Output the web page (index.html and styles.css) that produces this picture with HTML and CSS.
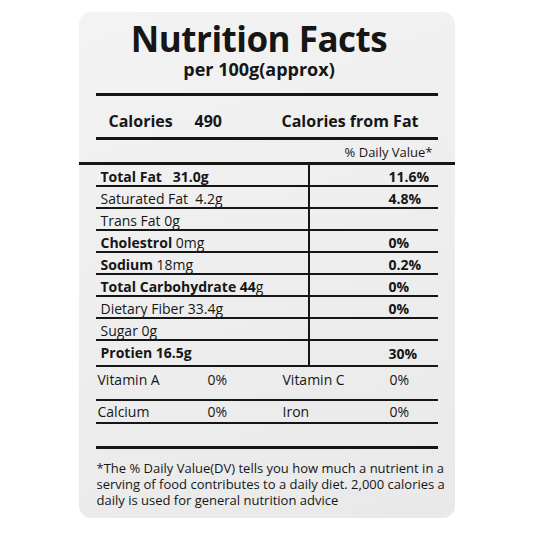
FILE: index.html
```html
<!DOCTYPE html>
<html lang="en">

<head>
  <meta charset="utf-8">
  <title>Nutrition Facts</title>
  <link rel="stylesheet" href="styles.css">
</head>

<body>
  <div class="label">
    <div class="head">
      <h1 class="title">Nutrition Facts</h1>
      <p class="sub">per 100g(approx)</p>
    </div>

    <div class="cal">
      <b>Calories</b>
      <b>490</b>
      <b>Calories from Fat</b>
    </div>
    <div class="dv">% Daily Value*</div>

    <div class="facts">
      <div class="row"><span class="name"><b>Total Fat</b>&nbsp;&nbsp;&nbsp;<b>31.0g</b></span><span class="pct">11.6%</span></div>
      <div class="row"><span class="name">Saturated Fat&nbsp;&nbsp;4.2g</span><span class="pct">4.8%</span></div>
      <div class="row"><span class="name">Trans Fat 0g</span><span class="pct"></span></div>
      <div class="row"><span class="name"><b>Cholestrol</b> 0mg</span><span class="pct">0%</span></div>
      <div class="row"><span class="name"><b>Sodium</b> 18mg</span><span class="pct">0.2%</span></div>
      <div class="row"><span class="name"><b>Total Carbohydrate</b> <b>44</b>g</span><span class="pct">0%</span></div>
      <div class="row"><span class="name">Dietary Fiber 33.4g</span><span class="pct">0%</span></div>
      <div class="row"><span class="name">Sugar 0g</span><span class="pct"></span></div>
      <div class="row tall"><span class="name"><b>Protien 16.5g</b></span><span class="pct">30%</span></div>
    </div>

    <div class="vit vit-a">
      <span>Vitamin A</span><span>0%</span><span>Vitamin C</span><span>0%</span>
    </div>
    <div class="vit vit-b">
      <span>Calcium</span><span>0%</span><span>Iron</span><span>0%</span>
    </div>
    <div class="blank"></div>

    <p class="note">
      <span>*The % Daily Value(DV) tells you how much a nutrient in a</span>
      <span>serving of food contributes to a daily diet. 2,000 calories a</span>
      <span>daily is used for general nutrition advice</span>
    </p>
  </div>
</body>

</html>
```

FILE: styles.css
```css
* {
  box-sizing: border-box;
}

body {
  margin: 0;
  background: #fff;
  color: #161616;
  font-family: "Open Sans", "Noto Sans", sans-serif;
}

.label {
  width: 376px;
  height: 506px;
  margin: 12px auto 0;
  padding: 7px 17px 0;
  border-radius: 12px;
  background: linear-gradient(160deg, #f3f3f3, #e9e9e9);
}

/* printed a little left of centre */
.head {
  padding-right: 15px;
  text-align: center;
}

.title {
  margin: 0;
  font-size: 35px;
  line-height: 40px;
  font-weight: 700;
  letter-spacing: -0.5px;
}

.sub {
  margin: 0;
  font-size: 18px;
  line-height: 20px;
  font-weight: 700;
}

.cal {
  display: grid;
  grid-template-columns: 86px 87px auto;
  height: 47px;
  margin-top: 14px;
  padding: 15px 0 0 13px;
  border-top: 3px solid #161616;
  border-bottom: 3px solid #161616;
  font-size: 16px;
  line-height: 20px;
}

/* the rule under this one runs the full width of the card */
.dv {
  height: 25px;
  margin: 0 -17px;
  padding: 4px 22px 0 0;
  border-bottom: 3px solid #161616;
  font-size: 13px;
  line-height: 16px;
  text-align: right;
}

.row {
  display: grid;
  grid-template-columns: 214px 1fr;
  height: 22px;
  border-bottom: 2px solid #161616;
  font-size: 14px;
  line-height: 18px;
}

.row .name {
  padding: 3px 0 0 5px;
  border-right: 2px solid #161616;
  white-space: nowrap;
}

.row .pct {
  padding: 3px 0 0 79px;
  font-weight: 700;
}

.row.tall {
  height: 26px;
}

.row.tall .pct {
  padding-top: 4px;
}

.vit {
  display: grid;
  grid-template-columns: 110px 75px 107px auto;
  padding-left: 2px;
  border-bottom: 2px solid #161616;
  font-size: 14px;
  line-height: 18px;
}

.vit-a {
  height: 34px;
  padding-top: 4px;
}

.vit-b {
  height: 23px;
  padding-top: 2px;
}

.blank {
  height: 25px;
  border-bottom: 3px solid #161616;
}

.note {
  margin: 11px -8px 0 1px;
  font-size: 13px;
  line-height: 16px;
  white-space: nowrap;
}

.note span {
  display: block;
  height: 16px;
}
```
